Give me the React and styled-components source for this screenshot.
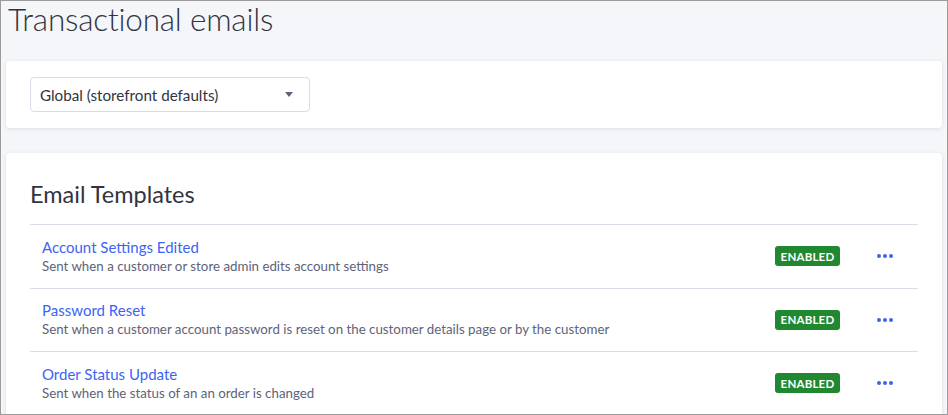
import React from 'react';
import styled, { createGlobalStyle } from 'styled-components';

const GlobalStyle = createGlobalStyle`
  html, body {
    margin: 0;
    padding: 0;
  }
  body {
    font-family: Lato, "Open Sans", sans-serif;
    background: #f5f6fa;
  }
  * {
    box-sizing: border-box;
  }
`;

const Page = styled.div`
  width: 948px;
  height: 415px;
  overflow: hidden;
  border: 1px solid #9b9b9b;
  padding: 0 5px;
  background: #f5f6fa;
`;

const PageTitle = styled.h1`
  margin: 0 0 0 2px;
  height: 60px;
  font-size: 31.5px;
  font-weight: 300;
  line-height: 36px;
  color: #313440;
  letter-spacing: -0.2px;
`;

const Card = styled.section`
  background: #ffffff;
  border-radius: 4px;
  box-shadow: 0 1px 4px rgba(49, 52, 64, 0.12);
  padding: ${({ $padding }) => $padding};
  margin-bottom: ${({ $gap }) => $gap || 0}px;
`;

const Select = styled.div`
  width: 280px;
  height: 35px;
  border: 1px solid #d9dce9;
  border-radius: 4px;
  display: flex;
  align-items: center;
  justify-content: space-between;
  padding: 0 16px 0 9px;
  font-size: 15.2px;
  color: #313440;
`;

const Caret = styled.span`
  width: 0;
  height: 0;
  border-left: 4px solid transparent;
  border-right: 4px solid transparent;
  border-top: 5px solid #5e637a;
`;

const Heading = styled.h2`
  margin: 0;
  height: 48px;
  font-size: 23.5px;
  font-weight: 400;
  line-height: 32px;
  color: #313440;
  padding-top: 1px;
  border-bottom: 1px solid #d9dce9;
`;

const List = styled.ul`
  list-style: none;
  margin: 0;
  padding: 0;
`;

const Row = styled.li`
  display: flex;
  align-items: center;
  height: 63.5px;
  padding: 0 25px 0 12px;
  border-bottom: 1px solid #d9dce9;
`;

const Info = styled.div`
  flex: 1;
  display: flex;
  flex-direction: column;
`;

const TemplateLink = styled.a`
  font-size: 15px;
  line-height: 20px;
  color: #3c64f4;
  text-decoration: none;
`;

const Description = styled.span`
  font-size: 13.3px;
  line-height: 19px;
  color: #5e637a;
`;

const Badge = styled.span`
  width: 65px;
  height: 20px;
  border-radius: 3px;
  background: #208831;
  color: #ffffff;
  font-size: 11.5px;
  font-weight: 700;
  letter-spacing: 0.2px;
  display: flex;
  align-items: center;
  justify-content: center;
  margin-right: 37px;
`;

const MoreButton = styled.button`
  border: 0;
  background: none;
  padding: 0;
  width: 16px;
  height: 16px;
  display: flex;
  align-items: center;
  justify-content: center;
  cursor: pointer;
`;

const Dots = () => (
  <svg width="16" height="4" viewBox="0 0 16 4">
    <circle cx="2" cy="2" r="2" fill="#3c64f4" />
    <circle cx="8" cy="2" r="2" fill="#3c64f4" />
    <circle cx="14" cy="2" r="2" fill="#3c64f4" />
  </svg>
);

const templates = [
  {
    name: 'Account Settings Edited',
    desc: 'Sent when a customer or store admin edits account settings',
  },
  {
    name: 'Password Reset',
    desc: 'Sent when a customer account password is reset on the customer details page or by the customer',
  },
  {
    name: 'Order Status Update',
    desc: 'Sent when the status of an an order is changed',
  },
];

export default function App() {
  return (
    <>
      <GlobalStyle />
      <Page>
        <PageTitle>Transactional emails</PageTitle>
        <Card $padding="16px 24px" $gap={25}>
          <Select>
            Global (storefront defaults)
            <Caret />
          </Select>
        </Card>
        <Card $padding="24px 24px">
          <Heading>Email Templates</Heading>
          <List>
            {templates.map((t) => (
              <Row key={t.name}>
                <Info>
                  <TemplateLink href="#">{t.name}</TemplateLink>
                  <Description>{t.desc}</Description>
                </Info>
                <Badge>ENABLED</Badge>
                <MoreButton aria-label="More actions">
                  <Dots />
                </MoreButton>
              </Row>
            ))}
          </List>
        </Card>
      </Page>
    </>
  );
}
